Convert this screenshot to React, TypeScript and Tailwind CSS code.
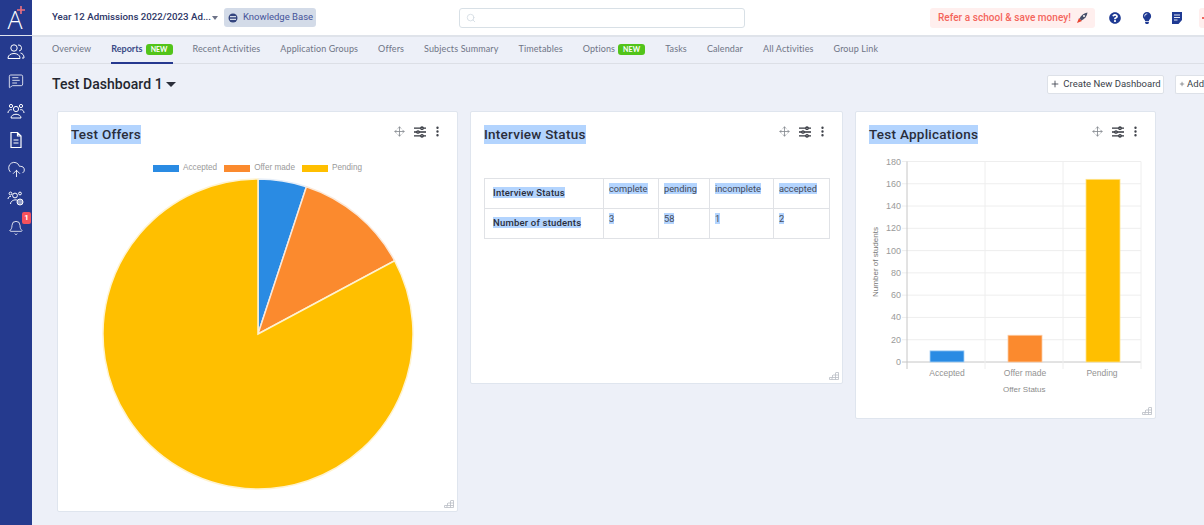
import React from "react";
import { Search, Move, EllipsisVertical, Bell, CloudUpload, MessageSquareText, Plus } from "lucide-react";
import { FaQuestionCircle, FaLightbulb } from "react-icons/fa";

const Sel = ({ children, className = "" }: { children: React.ReactNode; className?: string }) => (
  <span className={`bg-[#b3d4fe] ${className}`}>{children}</span>
);

const Tab = ({ label, active, isNew }: { label: string; active?: boolean; isNew?: boolean }) => (
  <div className={`flex h-[27px] items-center gap-[3px] border-b-2 ${active ? "border-[#26398f] font-bold tracking-[0px] text-[#3a4a86]" : "border-transparent text-[#6f7586]"}`}>
    <span>{label}</span>
    {isNew && (
      <span className="flex h-[11px] w-[27px] items-center justify-center rounded-[3px] bg-[#52c41a] text-[7px] font-bold leading-none text-white">NEW</span>
    )}
  </div>
);

const Sliders = () => (
  <svg width="12" height="12" viewBox="0 0 12 12" fill="none" stroke="#33363e" strokeWidth="1.3">
    <path d="M0 2.2h12M0 6h12M0 9.8h12" />
    <circle cx="8" cy="2.2" r="1.2" fill="white" />
    <circle cx="4" cy="6" r="1.2" fill="white" />
    <circle cx="8" cy="9.8" r="1.2" fill="white" />
  </svg>
);

const CardHead = ({ title }: { title: string }) => (
  <div className="flex h-[19px] items-start justify-between">
    <h2 className="text-[13.5px] font-medium leading-[18px] tracking-[0.25px] text-[#2a2d3a]">
      <Sel className="inline-block h-[19px]">{title}</Sel>
    </h2>
    <div className="flex items-center">
      <Move size={11} className="text-[#84898f]" strokeWidth={1.8} />
      <span className="ml-[9px]"><Sliders /></span>
      <EllipsisVertical size={13} className="ml-[5px] text-[#3d4048]" strokeWidth={2.4} />
    </div>
  </div>
);

const Grip = () => (
  <svg width="10" height="8" viewBox="0 0 10 8" className="absolute bottom-[3px] right-[3px]">
    <g fill="none" stroke="#b9bdc4" strokeWidth="0.8">
      <path d="M7 .5h2.5v7H.5V5.5h9M4 3h5.5v0M3 5.5v2M6.5 .5v7M3.5 3v2.5" />
    </g>
  </svg>
);

const polar = (deg: number, r = 155) => {
  const a = (deg * Math.PI) / 180;
  return [158 + r * Math.sin(a), 158 - r * Math.cos(a)];
};
const slice = (from: number, to: number) => {
  const [x1, y1] = polar(from);
  const [x2, y2] = polar(to);
  return `M158 158L${x1} ${y1}A155 155 0 ${to - from > 180 ? 1 : 0} 1 ${x2} ${y2}Z`;
};

const Pie = () => (
  <svg width="316" height="316" viewBox="0 0 316 316">
    <path d={slice(0, 18.2)} fill="#2a8be3" stroke="#e6eef8" strokeWidth="1.5" />
    <path d={slice(18.2, 61.8)} fill="#fb8a2e" stroke="#fbe8d8" strokeWidth="1.5" />
    <path d={slice(61.8, 360)} fill="#ffbf00" stroke="#fff3cf" strokeWidth="1.5" />
  </svg>
);

const LegendItem = ({ color, label }: { color: string; label: string }) => (
  <div className="flex items-center gap-[4px]">
    <span className="h-[7px] w-[26px]" style={{ backgroundColor: color }} />
    <span>{label}</span>
  </div>
);

const BarChart = () => {
  const ticks = [0, 20, 40, 60, 80, 100, 120, 140, 160, 180];
  const y = (v: number) => 252 - v * (200.5 / 180);
  const bars = [
    { x: 73, h: 10, c: "#2a8be3", s: "#a9d1f5" },
    { x: 151, h: 24, c: "#fb8a2e", s: "#fdcba3" },
    { x: 229, h: 164, c: "#ffbf00", s: "#ffe38a" },
  ];
  const fontFamily = "'Liberation Sans', sans-serif";
  return (
    <svg width="298" height="270" viewBox="0 0 298 270" fontFamily={fontFamily}>
      {ticks.map((t) => (
        <g key={t}>
          <line x1="45" x2="284" y1={y(t)} y2={y(t)} stroke={t === 0 ? "#c6c6c6" : "#eeeeee"} />
          <text x="44" y={y(t) + 3} textAnchor="end" fontSize="9" fill="#9a9a9a">{t}</text>
        </g>
      ))}
      {[50, 128, 206, 284].map((x) => (
        <line key={x} x1={x} x2={x} y1="51.5" y2="259" stroke={x === 50 ? "#c6c6c6" : "#eeeeee"} />
      ))}
      {bars.map((b) => (
        <rect key={b.x} x={b.x} y={y(b.h)} width="34" height={252 - y(b.h)} fill={b.c} stroke={b.s} strokeWidth="0.8" />
      ))}
      {[["Accepted", 90], ["Offer made", 168], ["Pending", 245]].map(([l, x]) => (
        <text key={l as string} x={x as number} y="266" textAnchor="middle" fontSize="8.5" fill="#939393">{l}</text>
      ))}
      <text transform="translate(21 152) rotate(-90)" textAnchor="middle" fontSize="8" fill="#777">Number of students</text>
    </svg>
  );
};

export default function App() {
  const heads = ["complete", "pending", "incomplete", "accepted"];
  const vals = ["3", "58", "1", "2"];
  return (
    <div className="flex h-[525px] w-[1204px] overflow-hidden bg-[#edf0f8] font-['Roboto',sans-serif]">
      <aside className="flex w-[32px] shrink-0 flex-col items-center bg-[#253a8e] text-white">
        <div className="relative flex h-[36px] w-full items-center justify-center border-b border-[#dfe3ee]">
          <span className="pr-[2px] pt-[3px] font-['Open_Sans',sans-serif] text-[25px] font-light leading-none">A</span>
          <svg width="8" height="8" viewBox="0 0 8 8" className="absolute left-[17px] top-[6px]"><path d="M4 0v8M0 4h8" stroke="#ef7180" strokeWidth="1.6" /></svg>
        </div>
        <div className="mt-[7px] flex flex-col items-center gap-[11.4px]">
          <svg width="18" height="18" viewBox="0 0 18 18" fill="none" stroke="white" strokeWidth="1"><circle cx="7" cy="5" r="3.2" /><path d="M1 15c0-6 12-6 12 0v.5H1zM11 2a3 3 0 0 1 1 6M13.5 10c2 .5 3.5 2 3.5 4.5V15h-2" /></svg>
          <div className="flex h-[18px] items-center"><MessageSquareText size={16} strokeWidth={1.2} /></div>
          <svg width="18" height="18" viewBox="0 0 18 18" fill="none" stroke="white" strokeWidth="1"><circle cx="9" cy="7" r="2.6" /><path d="M4 16c0-5 10-5 10 0zM1 11c0-3 3-4 4-3M17 11c0-3-3-4-4-3" /><circle cx="4" cy="4" r="1.6" /><circle cx="14" cy="4" r="1.6" /></svg>
          <svg width="16" height="18" viewBox="0 0 16 18" fill="none" stroke="white" strokeWidth="1.2"><path d="M3 1.5h6.5L13 5v11.5H3zM9.5 1.5V5H13M5.5 9h5M5.5 12h5" /></svg>
          <div className="flex h-[18px] items-center"><CloudUpload size={19} strokeWidth={1.1} /></div>
          <svg width="18" height="18" viewBox="0 0 18 18" fill="none" stroke="white" strokeWidth="1"><circle cx="8" cy="5.5" r="2.4" /><path d="M3.5 14c0-4 6-5 7-3.5M1 9c0-2 2-3 3-2.5" /><circle cx="3.5" cy="3.5" r="1.4" /><circle cx="13" cy="3.5" r="1.4" /><circle cx="13" cy="12" r="3" fill="white" fillOpacity=".5" /></svg>
          <div className="relative flex h-[18px] items-center">
            <Bell size={16} strokeWidth={1.2} />
            <span className="absolute left-[14px] top-[-7px] flex h-[12px] w-[9px] items-center justify-center rounded-[2px] bg-[#f4515c] text-[8px] font-bold leading-none">1</span>
          </div>
        </div>
      </aside>

      <div className="flex min-w-0 flex-1 flex-col">
        <header className="flex h-[37px] shrink-0 items-center border-b-2 border-[#dfe3ea] bg-white pl-[20px]">
          <span className="w-[158px] shrink-0 whitespace-nowrap text-[9.7px] font-medium text-[#2c3566]">Year 12 Admissions 2022/2023 Ad...</span>
          <span className="ml-[2px] h-0 w-0 shrink-0 border-x-[3.5px] border-t-[4px] border-x-transparent border-t-[#6d7388]" />
          <div className="ml-[6px] flex h-[19px] w-[92px] shrink-0 items-center gap-[5px] rounded-[3px] bg-[#d3dbe8] pl-[4px] text-[9.5px] text-[#46549a]">
            <svg width="10" height="10" viewBox="0 0 10 10"><circle cx="5" cy="5" r="4.5" fill="#34457f" /><path d="M2 3.6h6M2 6.4h6" stroke="#d3dbe8" strokeWidth="1.1" /></svg>
            <span className="whitespace-nowrap">Knowledge Base</span>
          </div>
          <div className="ml-[143px] flex h-[20px] w-[286px] shrink-0 items-center rounded-[3px] border border-[#d8e0e6] pl-[6px]">
            <Search size={10} className="text-[#d3dbe2]" />
          </div>
          <div className="ml-[185px] flex h-[20px] w-[165px] shrink-0 items-center gap-[5px] rounded-[3px] bg-[#ffefee] pl-[8px] text-[10px] font-medium tracking-[0.05px] text-[#f4655c]">
            <span className="whitespace-nowrap">Refer a school &amp; save money!</span>
            <svg width="12" height="12" viewBox="0 0 12 12"><path d="M1 11l2-5 3 3z" fill="#e8432f" /><path d="M3.5 6.5C5 3 8 1 11.5.5 11 4 9 7 5.5 8.5z" fill="#48506a" /><circle cx="8" cy="4" r="1" fill="white" /></svg>
          </div>
          <FaQuestionCircle size={12} className="ml-[14px] shrink-0 text-[#1f3a93]" />
          <FaLightbulb size={12} className="ml-[20px] shrink-0 text-[#1f3a93]" />
          <svg width="10" height="12" viewBox="0 0 10 12" className="ml-[19px] shrink-0"><path d="M0 0h10v8l-3.5 4H0z" fill="#1f3a93" /><path d="M2 3h6M2 5.5h6M2 8h3.5" stroke="white" strokeWidth=".9" /></svg>
          <div className="ml-[17px] flex h-[20px] w-[10px] shrink-0 items-center rounded-l-[3px] bg-[#ffefee] pl-[3px]">
            <span className="h-[2px] w-[3px] bg-[#f4655c]" />
          </div>
        </header>

        <nav className="flex h-[27px] shrink-0 items-center gap-[20px] border-b border-[#dcdfe6] pl-[20px] font-['Lato',sans-serif] text-[9px] tracking-[0.12px]">
          <Tab label="Overview" />
          <Tab label="Reports" active isNew />
          <Tab label="Recent Activities" />
          <Tab label="Application Groups" />
          <Tab label="Offers" />
          <Tab label="Subjects Summary" />
          <Tab label="Timetables" />
          <Tab label="Options" isNew />
          <Tab label="Tasks" />
          <Tab label="Calendar" />
          <Tab label="All Activities" />
          <Tab label="Group Link" />
        </nav>

        <div className="flex h-[47px] shrink-0 items-center pb-[7px] pl-[20px]">
          <h1 className="whitespace-nowrap text-[14px] font-medium tracking-[0.05px] text-[#23262f]">Test Dashboard 1</h1>
          <span className="ml-[3px] h-0 w-0 border-x-[5px] border-t-[5px] border-x-transparent border-t-[#2b2e3a]" />
          <div className="ml-auto flex items-center gap-[11px]">
            <button className="flex h-[19px] w-[117px] items-center justify-center gap-[3px] rounded-[2px] border border-[#dde1e8] bg-white text-[9.5px] text-[#3b3f4a]">
              <Plus size={10} /> <span className="whitespace-nowrap">Create New Dashboard</span>
            </button>
            <button className="flex h-[19px] w-[29px] items-center gap-[2px] rounded-l-[2px] border border-r-0 border-[#dde1e8] bg-white pl-[3px] text-[9.5px] text-[#3b3f4a]">
              <Plus size={10} /> <span>Add</span>
            </button>
          </div>
        </div>

        <main className="flex items-start gap-[12px] pl-[25px]">
          <section className="relative h-[401px] w-[401px] shrink-0 rounded-[2px] border border-[#dfe5ee] bg-white px-[13px] pt-[13px]">
            <CardHead title="Test Offers" />
            <div className="mt-[19px] flex justify-center gap-[7px] font-['Liberation_Sans',sans-serif] text-[8.2px] leading-[10px] text-[#9a9a9a]">
              <LegendItem color="#2a8be3" label="Accepted" />
              <LegendItem color="#fb8a2e" label="Offer made" />
              <LegendItem color="#ffbf00" label="Pending" />
            </div>
            <div className="ml-[29px] mt-[3px]"><Pie /></div>
            <Grip />
          </section>

          <section className="relative h-[273px] w-[373px] shrink-0 rounded-[2px] border border-[#dfe5ee] bg-white px-[13px] pt-[13px]">
            <CardHead title="Interview Status" />
            <table className="mt-[34px] w-[345px] table-fixed border-collapse text-[9.25px] text-[#444a5a]">
              <colgroup>
                <col className="w-[119px]" /><col className="w-[55px]" /><col className="w-[51px]" /><col className="w-[64px]" /><col className="w-[56px]" />
              </colgroup>
              <tbody>
                <tr className="h-[30px]">
                  <td className="border border-[#e0e2e6] pl-[8px] align-middle text-[9.5px] font-medium tracking-[0.2px] text-[#2a2d3a]"><Sel>Interview Status</Sel></td>
                  {heads.map((h) => (
                    <td key={h} className="border border-[#e0e2e6] pl-[5px] pt-[3px] align-top"><Sel>{h}</Sel></td>
                  ))}
                </tr>
                <tr className="h-[30px]">
                  <td className="border border-[#e0e2e6] pl-[8px] align-middle text-[9.5px] font-medium tracking-[0.2px] text-[#2a2d3a]"><Sel>Number of students</Sel></td>
                  {vals.map((h) => (
                    <td key={h} className="border border-[#e0e2e6] pl-[5px] pt-[3px] align-top"><Sel>{h}</Sel></td>
                  ))}
                </tr>
              </tbody>
            </table>
            <Grip />
          </section>

          <section className="relative h-[308px] w-[301px] shrink-0 rounded-[2px] border border-[#dfe5ee] bg-white">
            <div className="px-[13px] pt-[13px]">
              <CardHead title="Test Applications" />
            </div>
            <div className="-mt-[34px] ml-[1px] h-[270px]"><BarChart /></div>
            <div className="ml-[147px] mt-[5px] font-['Liberation_Sans',sans-serif] text-[8px] leading-[10px] text-[#8c8c8c]">Offer Status</div>
            <Grip />
          </section>
        </main>
      </div>
    </div>
  );
}
